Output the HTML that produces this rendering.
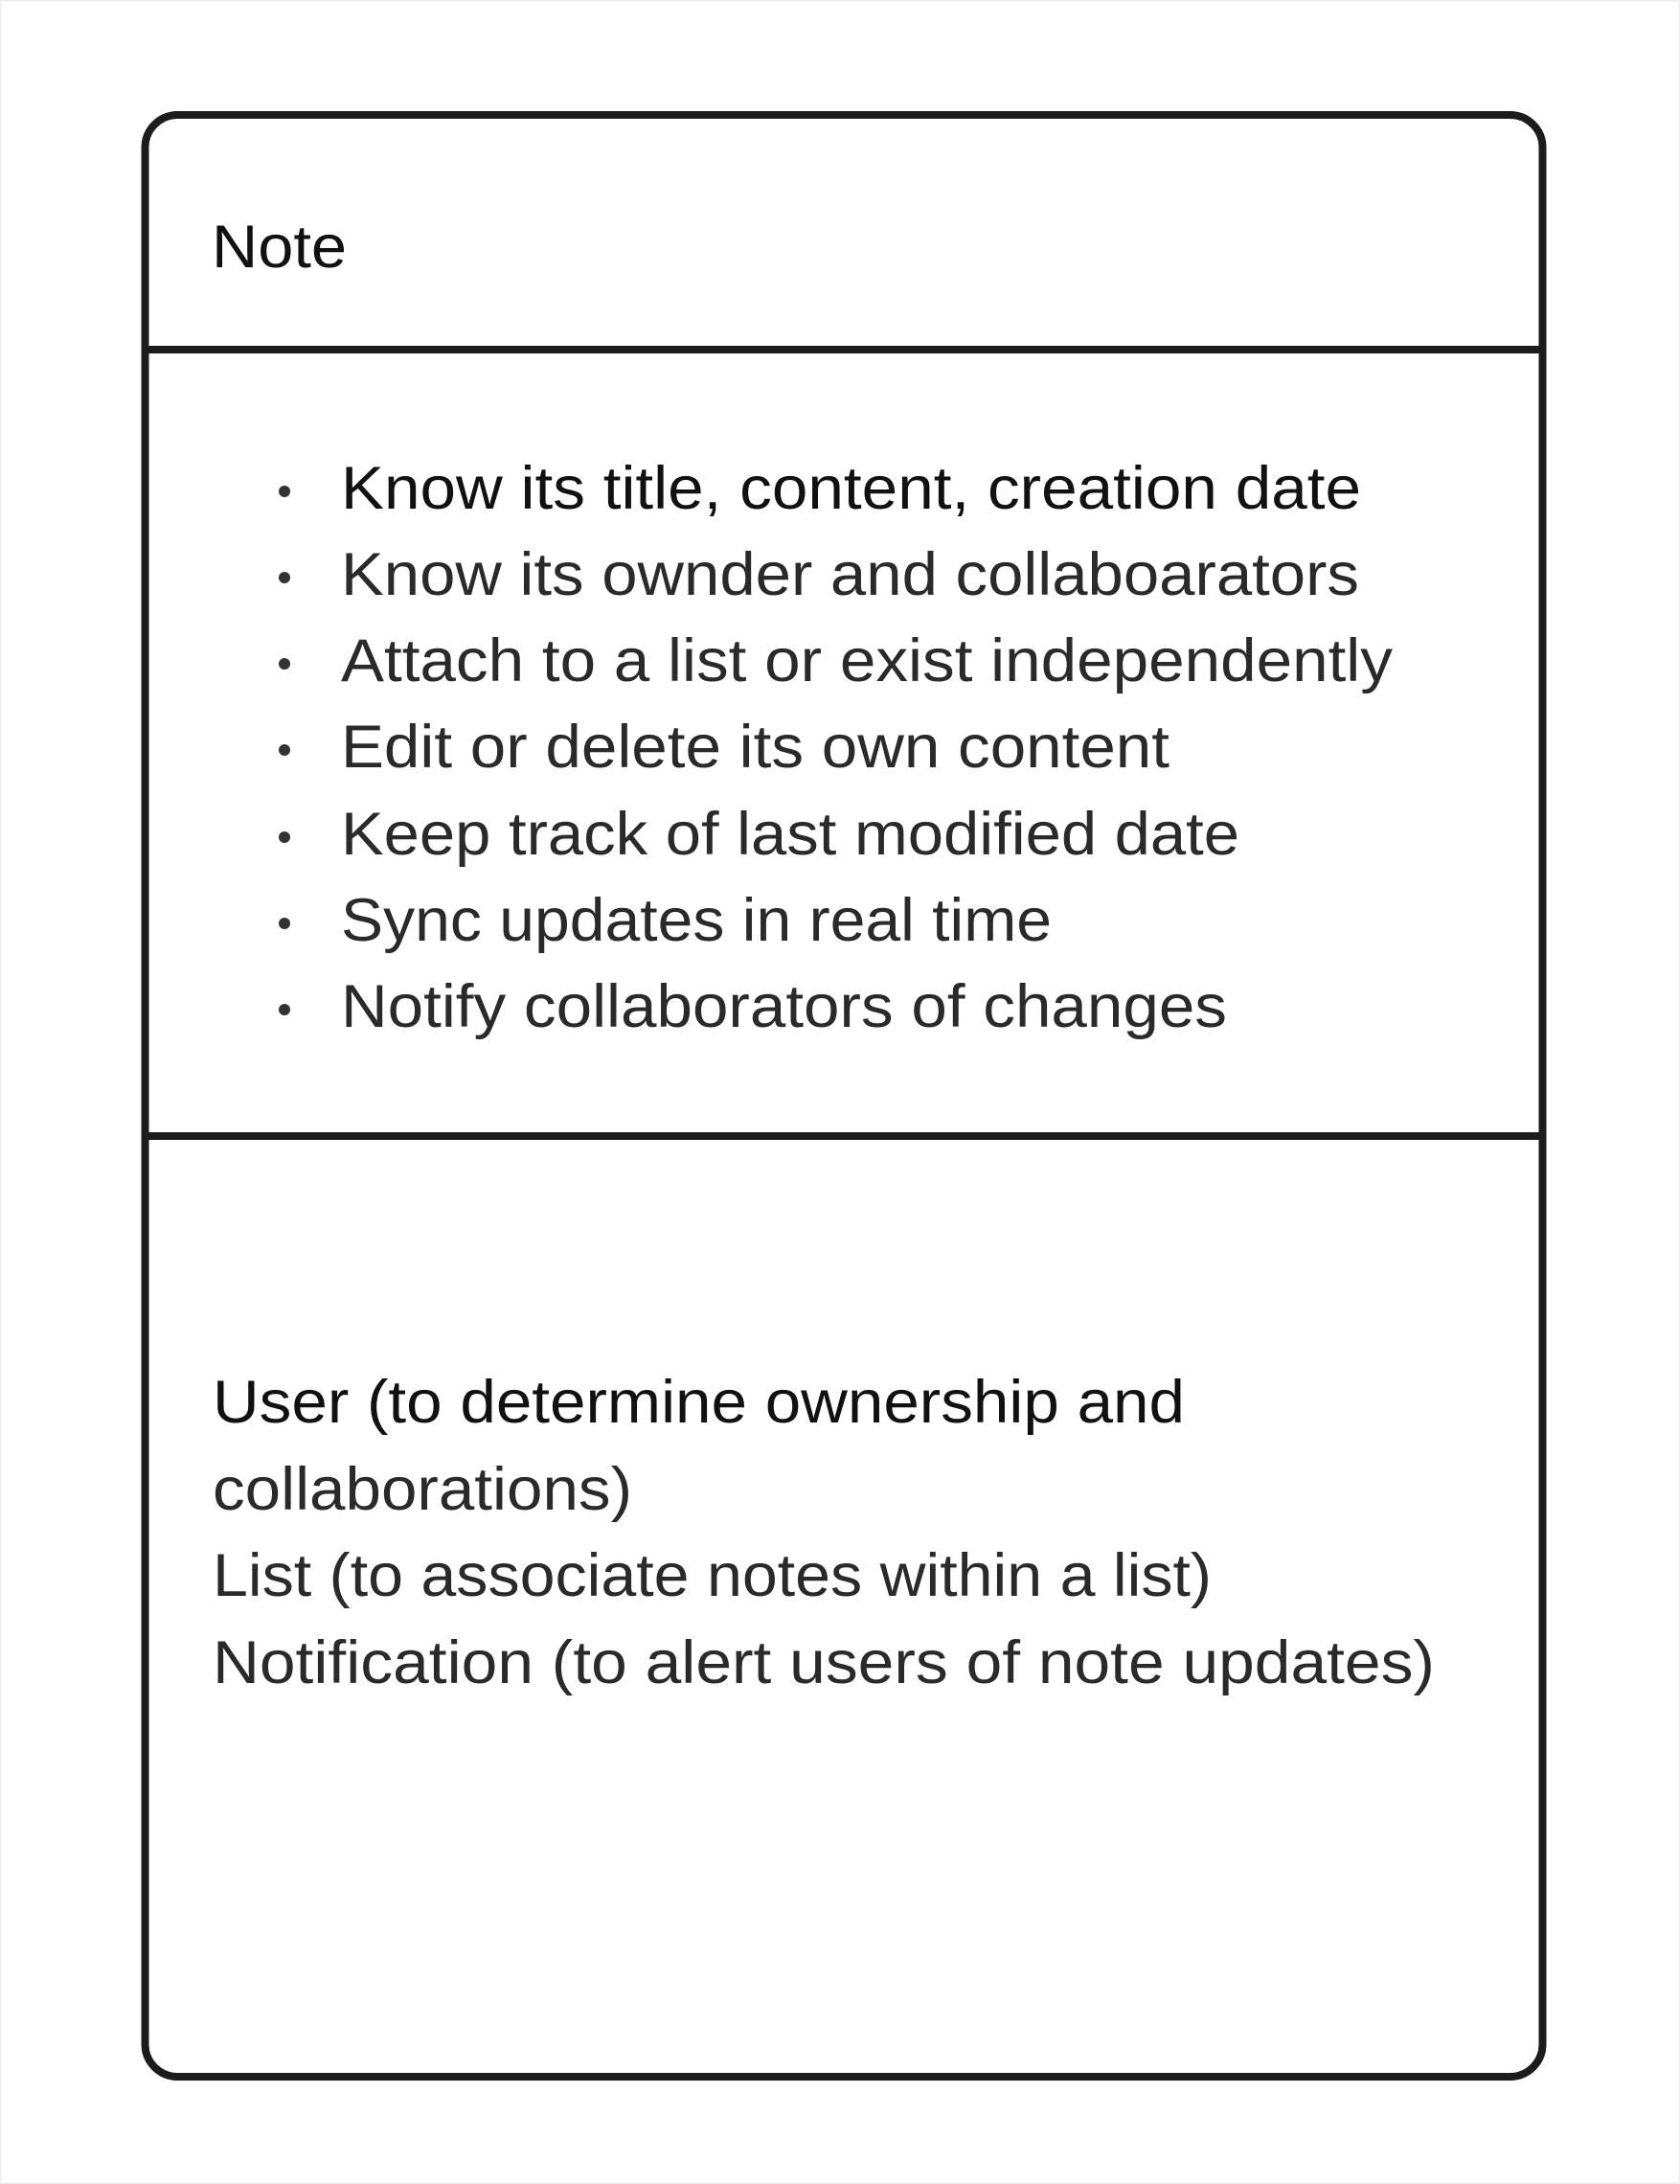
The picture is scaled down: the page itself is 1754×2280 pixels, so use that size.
<!DOCTYPE html>
<html><head><meta charset="utf-8"><style>
html,body{margin:0;padding:0;background:#fff;}
svg{display:block}
text{font-family:"Liberation Sans",sans-serif;font-size:63px;fill:#2a2a2a}
</style></head><body>
<svg width="1754" height="2280" viewBox="0 0 1754 2280" xmlns="http://www.w3.org/2000/svg">
<rect x="0.5" y="0.5" width="1753" height="2279" fill="#fff" stroke="#eeeeee" stroke-width="2"/>
<rect x="151.5" y="120" width="1459" height="2048" rx="34" ry="34" fill="#fff" stroke="#1c1c1c" stroke-width="8"/>
<line x1="151" y1="365" x2="1611" y2="365" stroke="#1c1c1c" stroke-width="8"/>
<line x1="151" y1="1186" x2="1611" y2="1186" stroke="#1c1c1c" stroke-width="8"/>
<text x="221" y="279" style="fill:#111" textLength="141" lengthAdjust="spacingAndGlyphs">Note</text>
<g fill="#333">
<circle cx="297" cy="513" r="6"/>
<circle cx="297" cy="603" r="6"/>
<circle cx="297" cy="693" r="6"/>
<circle cx="297" cy="783" r="6"/>
<circle cx="297" cy="874" r="6"/>
<circle cx="297" cy="964" r="6"/>
<circle cx="297" cy="1054" r="6"/>
</g>
<text x="356" y="531" style="fill:#111" textLength="1065" lengthAdjust="spacingAndGlyphs">Know its title, content, creation date</text>
<text x="356" y="621" textLength="1063" lengthAdjust="spacingAndGlyphs">Know its ownder and collaboarators</text>
<text x="356" y="711" textLength="1098" lengthAdjust="spacingAndGlyphs">Attach to a list or exist independently</text>
<text x="356" y="801" textLength="865" lengthAdjust="spacingAndGlyphs">Edit or delete its own content</text>
<text x="356" y="892" textLength="938" lengthAdjust="spacingAndGlyphs">Keep track of last modified date</text>
<text x="356" y="982" textLength="742" lengthAdjust="spacingAndGlyphs">Sync updates in real time</text>
<text x="356" y="1072" textLength="925" lengthAdjust="spacingAndGlyphs">Notify collaborators of changes</text>
<text x="222" y="1485" style="fill:#111" textLength="1015" lengthAdjust="spacingAndGlyphs">User (to determine ownership and</text>
<text x="222" y="1576" textLength="438" lengthAdjust="spacingAndGlyphs">collaborations)</text>
<text x="222" y="1666" textLength="1043" lengthAdjust="spacingAndGlyphs">List (to associate notes within a list)</text>
<text x="222" y="1757" textLength="1276" lengthAdjust="spacingAndGlyphs">Notification (to alert users of note updates)</text>
</svg>
</body></html>
